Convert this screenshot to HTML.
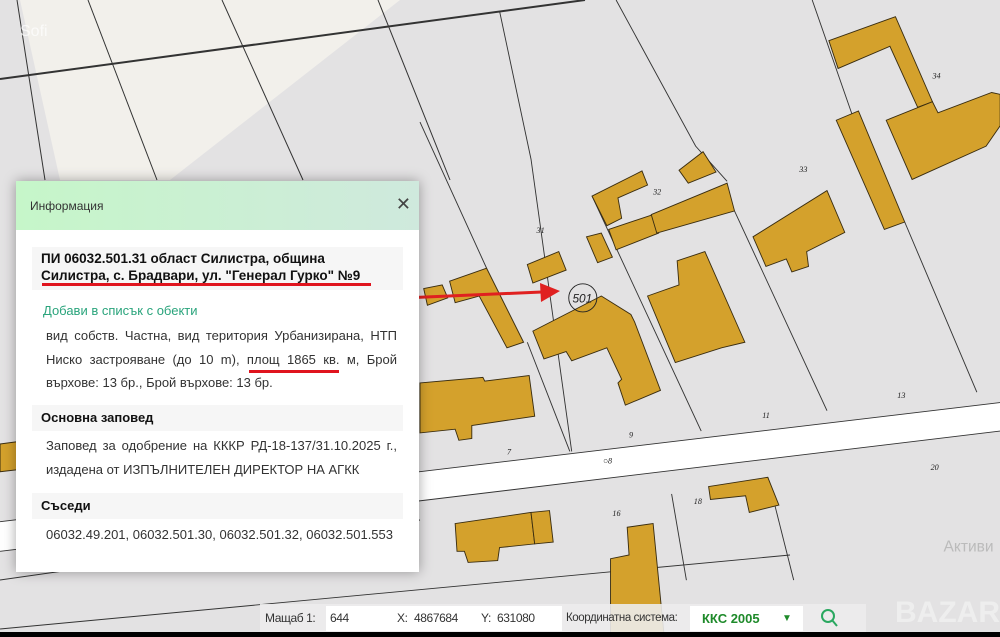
<!DOCTYPE html>
<html><head><meta charset="utf-8">
<style>
*{margin:0;padding:0;box-sizing:border-box}
body{width:1000px;height:637px;overflow:hidden;position:relative;background:#e3e2e3;font-family:"Liberation Sans","DejaVu Sans",sans-serif}
svg.map{position:absolute;left:0;top:0}
.panel{position:absolute;left:16px;top:181px;width:403px;height:391px;background:#fff;box-shadow:0 0 12px rgba(0,0,0,.35)}
.hdr{height:49px;background:linear-gradient(90deg,#c6f6c9,#cfe9dd);position:relative}
.hdr span{position:absolute;left:14px;top:18px;font-size:12px;color:#333}
.hdr b{position:absolute;right:8px;top:13px;font-size:18px;color:#444;font-weight:bold}
.sec{position:absolute;left:16px;width:371px;background:#f6f6f6;font-weight:bold;font-size:13px;color:#111;padding-left:9px}
.txt{position:absolute;left:30px;width:351px;font-size:13px;color:#333;line-height:23.5px;text-align:justify}
.bar{position:absolute;top:605px;height:27px;font-size:12px;color:#333;line-height:27px;letter-spacing:-0.4px}
.inp{position:absolute;top:606px;height:25px;background:#fff;font-size:12px;line-height:25px;color:#333}
</style></head><body>
<svg class="map" width="1000" height="637" viewBox="0 0 1000 637">
<polygon points="20,0 400,0 170,180 60,180" fill="#f2f0eb"/>
<g stroke="#333" stroke-width="1" fill="none">
<line x1="17" y1="0" x2="45" y2="180"/>
<line x1="88" y1="0" x2="157" y2="180"/>
<line x1="222" y1="0" x2="303" y2="180"/>
<line x1="378" y1="0" x2="450" y2="180"/>
<line x1="0" y1="79" x2="585" y2="0" stroke-width="2"/>
<line x1="0" y1="580" x2="420" y2="520"/>
</g>
<g transform="translate(420,0) scale(0.37)">
<polygon points="-1135,1410 1568,1088 1568,1165 -1135,1490" fill="#fff"/>
<g stroke="#333" stroke-width="2.5" fill="none">
<polyline points="215,30 300,430 410,1220"/>
<polyline points="530,0 745,395 830,490"/>
<polyline points="465,530 760,1165"/>
<polyline points="1060,0 1175,330"/>
<polyline points="850,570 1100,1110"/>
<polyline points="1310,600 1505,1060"/>
<polyline points="0,330 180,725"/>
<polyline points="290,925 405,1220"/>
<polyline points="-1135,1410 1568,1088"/>
<polyline points="-1135,1490 1568,1165"/>
<polyline points="680,1335 720,1568"/>
<polyline points="940,1290 1010,1568"/>
<polyline points="-1135,1700 1000,1500"/>
</g>
<g fill="#d4a12c" stroke="#3a2d10" stroke-width="2.5">
<polygon points="1105,110 1285,45 1385,275 1345,290 1270,125 1130,185"/>
<polygon points="1260,325 1385,275 1400,305 1545,250 1568,255 1568,340 1530,395 1330,485"/>
<polygon points="1125,325 1185,300 1310,600 1255,620"/>
<polygon points="900,640 1100,515 1148,628 1045,680 1050,720 1005,735 990,700 935,720"/>
<polygon points="615,800 700,770 695,705 770,680 878,925 815,940 690,980"/>
<polygon points="305,895 490,800 570,850 580,870 650,1055 555,1095 535,1035 545,1025 505,940 410,975 395,950 335,970"/>
<polygon points="290,715 375,680 395,730 305,765"/>
<polygon points="450,640 490,630 520,695 480,710"/>
<polygon points="510,620 630,580 645,630 530,675"/>
<polygon points="625,580 830,495 850,570 640,630"/>
<polygon points="465,530 600,462 615,500 535,535 545,590 505,610"/>
<polygon points="700,460 765,410 800,465 725,495"/>
<polygon points="80,760 180,725 280,925 235,940 160,800 95,818"/>
<polygon points="10,780 60,770 75,805 20,825"/>
<polygon points="0,1035 170,1020 175,1030 295,1015 310,1125 140,1150 140,1185 105,1190 95,1160 0,1170"/>
<polygon points="780,1315 940,1290 970,1365 890,1385 880,1340 785,1350"/>
<polygon points="95,1415 300,1385 310,1470 215,1480 210,1515 130,1520 120,1490 100,1490"/>
<polygon points="300,1385 350,1380 360,1465 310,1470"/>
<polygon points="560,1425 630,1415 660,1720 515,1720 515,1510 565,1500"/>
<polygon points="-1135,1200 -1060,1190 -1050,1265 -1135,1275"/>
</g>
<g font-size="22" font-style="italic" fill="#222" font-family="Liberation Serif,serif">
<text x="1385" y="212">34</text><text x="1025" y="465">33</text><text x="630" y="525">32</text><text x="315" y="630">31</text>
<text x="1290" y="1075">13</text><text x="925" y="1130">11</text><text x="565" y="1183">9</text><text x="235" y="1228">7</text>
<text x="1380" y="1270">20</text><text x="740" y="1362">18</text><text x="520" y="1395">16</text><text x="495" y="1253">○8</text>
</g>
<circle cx="440" cy="805" r="38" fill="none" stroke="#222" stroke-width="2.5"/>
<text x="412" y="817" font-size="32" font-style="italic" fill="#222">501</text>
<text x="1415" y="1490" font-size="42" fill="#bbb">Активи</text>
</g>
<line x1="403" y1="298" x2="542" y2="292" stroke="#e02020" stroke-width="3"/>
<polygon points="540,283 560,291 541,302" fill="#e02020"/>
<text x="895" y="622" font-size="30" font-weight="bold" fill="#eee" font-family="Liberation Sans">BAZAR</text>
<text x="20" y="36" font-size="16" fill="#fff" opacity=".7">Sofi</text>
<rect x="0" y="632" width="1000" height="5" fill="#000"/>
<rect x="260" y="604" width="606" height="28" fill="#ececec" opacity=".9"/>
</svg>

<div class="panel">
<div class="hdr"><span>Информация</span><b>✕</b></div>
<div class="sec" style="top:66px;height:43px;padding-top:3px;line-height:17px;font-size:13.5px">ПИ 06032.501.31 област Силистра, община<br>Силистра, с. Брадвари, ул. "Генерал Гурко" №9</div>
<div style="position:absolute;left:26px;top:102px;width:329px;height:3px;background:#e0141e"></div>
<div style="position:absolute;left:27px;top:122px;font-size:13px;color:#2aa47c">Добави в списък с обекти</div>
<div class="txt" style="top:143px">вид собств. Частна, вид територия Урбанизирана, НТП Ниско застрояване (до 10 m), площ 1865 кв. м, Брой върхове: 13 бр., Брой върхове: 13 бр.</div>
<div style="position:absolute;left:233px;top:189px;width:90px;height:3px;background:#e0141e"></div>
<div class="sec" style="top:224px;height:26px;line-height:26px">Основна заповед</div>
<div class="txt" style="top:253px">Заповед за одобрение на КККР РД-18-137/31.10.2025 г., издадена от ИЗПЪЛНИТЕЛЕН ДИРЕКТОР НА АГКК</div>
<div class="sec" style="top:312px;height:26px;line-height:26px">Съседи</div>
<div class="txt" style="top:342px;text-align:left">06032.49.201, 06032.501.30, 06032.501.32, 06032.501.553</div>
</div>

<div class="inp" style="left:326px;width:236px"></div>
<div class="bar" style="left:265px">Мащаб 1:</div>
<div class="bar" style="left:330px">644</div>
<div class="bar" style="left:397px">X:</div>
<div class="bar" style="left:414px">4867684</div>
<div class="bar" style="left:481px">Y:</div>
<div class="bar" style="left:497px">631080</div>
<div class="bar" style="left:566px;font-size:11.5px">Координатна система:</div>
<div class="inp" style="left:690px;width:113px;font-weight:bold;color:#1e8a2a;font-size:13px;padding-left:12px">ККС 2005 <span style="position:absolute;left:92px;font-size:10px">▼</span></div>
<svg style="position:absolute;left:820px;top:608px" width="20" height="20"><circle cx="8" cy="8" r="6" fill="none" stroke="#2aa860" stroke-width="2"/><line x1="12" y1="12" x2="17" y2="18" stroke="#2aa860" stroke-width="2"/></svg>
</body></html>
